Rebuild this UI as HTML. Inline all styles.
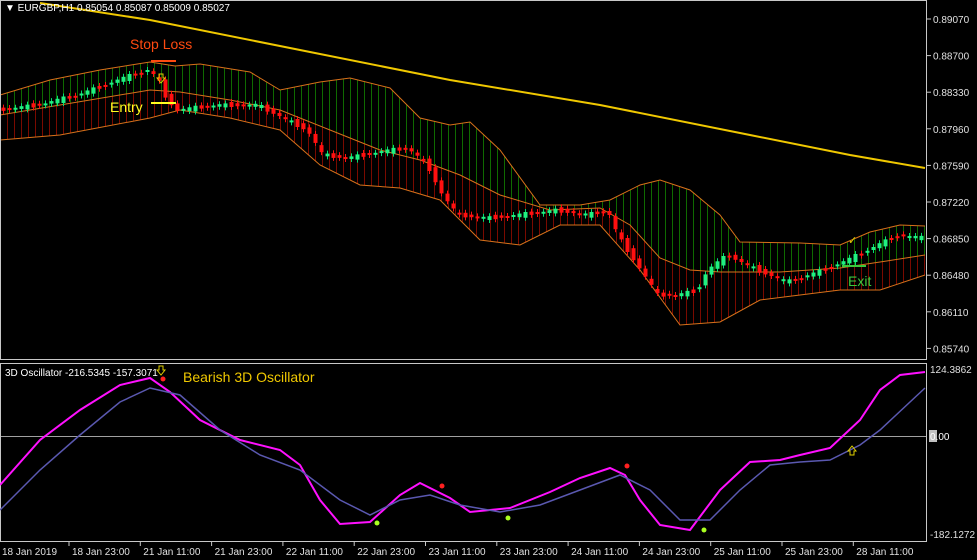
<!DOCTYPE html>
<html><head><meta charset="utf-8"><style>
html,body{margin:0;padding:0;background:#000;width:977px;height:560px;overflow:hidden}
svg{display:block}
text{font-family:"Liberation Sans",sans-serif}
</style></head><body>
<svg id="s" width="977" height="560" viewBox="0 0 977 560" xmlns="http://www.w3.org/2000/svg">
<defs>
<pattern id="hg" width="7" height="10" patternUnits="userSpaceOnUse"><rect x="0" y="0" width="1" height="10" fill="#0f6a00"/></pattern>
<pattern id="hr" width="7" height="10" patternUnits="userSpaceOnUse"><rect x="0" y="0" width="1" height="10" fill="#7a0a00"/></pattern>
</defs>
<rect width="977" height="560" fill="#000"/>
<g id="bands"></g>
<g id="candles"></g>
<polyline fill="none" stroke="#f0c800" stroke-width="2" points="40,3 150,20 300,50 450,80 600,105 750,135 850,155 925,168"/>
<rect x="0.5" y="0.5" width="926" height="359" fill="none" stroke="#c8c8c8"/>
<rect x="0.5" y="363.5" width="926" height="178" fill="none" stroke="#c8c8c8"/>
<line x1="1" y1="436.5" x2="926" y2="436.5" stroke="#a0a0a0"/>
<g id="osc"></g>
<g fill="#fff" font-size="10">
<text x="5" y="11">&#9660; EURGBP,H1  0.85054 0.85087 0.85009 0.85027</text>
<text x="5" y="376">3D Oscillator -216.5345 -157.3071</text>
</g>
<g fill="#e0e0e0" font-size="10" id="axis"></g>
<rect x="929" y="430" width="8" height="12" fill="#c0c0c0"/>
<text x="930" y="440" fill="#fff" font-size="10">0.00</text>
<text x="930" y="373" fill="#e0e0e0" font-size="10">124.3862</text>
<text x="930" y="538" fill="#e0e0e0" font-size="10">-182.1272</text>
<text x="130" y="49" fill="#ff4a10" font-size="14">Stop Loss</text>
<line x1="151" y1="61" x2="176" y2="61" stroke="#ff4a10" stroke-width="2"/>
<text x="110" y="112" fill="#ffff20" font-size="14">Entry</text>
<line x1="151" y1="103" x2="176" y2="103" stroke="#ffff20" stroke-width="2"/>
<text x="848" y="286" fill="#3cc83c" font-size="14">Exit</text>
<line x1="842" y1="266" x2="866" y2="266" stroke="#3cc83c" stroke-width="2"/>
<text x="848" y="244" fill="#e0d000" font-size="11">✓</text>
<text x="183" y="382" fill="#f0c800" font-size="14">Bearish 3D Oscillator</text>
<path d="M159,74h4v4h2l-4,5l-4,-5h2z" fill="none" stroke="#e0d000"/>
<path d="M159,366h4v4h2l-4,5l-4,-5h2z" fill="none" stroke="#e0d000"/>
<path d="M850,455h4v-4h2l-4,-5l-4,5h2z" fill="none" stroke="#e0d000"/>
<circle cx="163" cy="379" r="2.5" fill="#ff2020"/><circle cx="442" cy="486" r="2.5" fill="#ff2020"/><circle cx="627" cy="466" r="2.5" fill="#ff2020"/>
<circle cx="377" cy="523" r="2.5" fill="#aaff20"/><circle cx="508" cy="518" r="2.5" fill="#aaff20"/><circle cx="704" cy="530" r="2.5" fill="#aaff20"/>
</svg>
<script>
(function(){
var S="http://www.w3.org/2000/svg";
function el(p,t,a){var e=document.createElementNS(S,t);for(var k in a)e.setAttribute(k,a[k]);p.appendChild(e);return e;}
function interp(pts,x){for(var i=0;i<pts.length-1;i++){if(x>=pts[i][0]&&x<=pts[i+1][0]){var t=(x-pts[i][0])/(pts[i+1][0]-pts[i][0]);return pts[i][1]+t*(pts[i+1][1]-pts[i][1]);}}return pts[pts.length-1][1];}
function ps(a){return a.map(function(p){return p.join(",")}).join(" ");}
var up=[[0,95],[50,80],[100,70],[150,62],[175,66],[200,64],[250,72],[280,90],[320,82],[350,78],[390,88],[420,118],[450,125],[470,122],[500,150],[540,205],[580,205],[610,200],[640,185],[660,180],[690,190],[720,215],[740,242],[800,243],[840,245],[870,232],[900,225],[925,226]];
var mid=[[0,115],[60,105],[150,90],[180,92],[230,100],[280,110],[330,130],[380,150],[420,160],[460,175],[500,195],[550,210],[600,208],[630,225],[660,258],[690,270],[720,272],[780,272],[840,268],[880,262],[925,255]];
var lo=[[0,140],[60,135],[150,118],[180,110],[230,118],[280,130],[320,165],[360,185],[400,188],[440,200],[480,240],[520,245],[560,225],[600,225],[640,270],[680,325],[720,322],[760,300],[800,295],[840,290],[880,290],[925,275]];
var b=document.getElementById("bands");
el(b,"polygon",{points:ps(up.concat(mid.slice().reverse())),fill:"url(#hg)"});
el(b,"polygon",{points:ps(mid.concat(lo.slice().reverse())),fill:"url(#hr)"});
[up,mid,lo].forEach(function(l){el(b,"polyline",{points:ps(l),fill:"none",stroke:"#d8701a","stroke-width":1});});
var pr=[[0,110],[40,105],[80,95],[120,80],[150,70],[160,78],[170,100],[180,110],[220,105],[260,105],[290,120],[310,130],[325,155],[350,158],[380,152],[410,148],[430,165],[445,195],[460,215],[490,218],[520,215],[560,210],[590,215],[610,210],[620,235],[640,265],[660,295],[680,295],[700,290],[710,270],[730,255],[760,270],[790,282],[820,272],[850,260],[880,245],[900,235],[925,238]];
var c=document.getElementById("candles");
for(var x=3;x<922;x+=6){var y0=interp(pr,x-3),y1=interp(pr,x+3);var j=((x*37)%11)-5;var op=y0+j*0.6,cl=y1-j*0.4;var bull=cl<op;var tp=Math.min(op,cl),h=Math.max(2,Math.abs(op-cl));
el(c,"line",{x1:x+0.5,y1:tp-3,x2:x+0.5,y2:tp+h+3,stroke:bull?"#00e070":"#ff1010"});
el(c,"rect",{x:x-1.5,y:tp,width:4,height:h,fill:bull?"#20f080":"#ff1010"});}
var o=document.getElementById("osc");
el(o,"polyline",{fill:"none",stroke:"#ff10ff","stroke-width":2,points:ps([[0,485],[40,440],[80,410],[120,385],[150,378],[170,392],[200,420],[240,440],[280,450],[300,465],[320,500],[340,524],[370,522],[400,495],[420,483],[450,498],[470,512],[510,508],[550,492],[580,478],[610,468],[625,475],[640,500],[660,525],[690,530],[720,490],[750,462],[780,460],[800,455],[830,448],[860,420],[880,390],[900,375],[925,372]])});
el(o,"polyline",{fill:"none",stroke:"#5a58b0","stroke-width":1.5,points:ps([[0,510],[40,470],[80,435],[120,402],[150,388],[180,395],[220,430],[260,455],[300,470],[340,500],[370,515],[400,500],[430,495],[460,505],[500,512],[540,505],[580,490],[620,475],[650,490],[680,520],[710,520],[740,490],[770,465],[800,462],[830,460],[860,445],[880,430],[925,388]])});
var a=document.getElementById("axis");
["0.89070","0.88700","0.88330","0.87960","0.87590","0.87220","0.86850","0.86480","0.86110","0.85740"].forEach(function(t,i){var y=19+i*36.6;el(a,"line",{x1:927,y1:y,x2:931,y2:y,stroke:"#c8c8c8"});var e=el(a,"text",{x:933,y:y+4});e.textContent=t;});
["18 Jan 2019","18 Jan 23:00","21 Jan 11:00","21 Jan 23:00","22 Jan 11:00","22 Jan 23:00","23 Jan 11:00","23 Jan 23:00","24 Jan 11:00","24 Jan 23:00","25 Jan 11:00","25 Jan 23:00","28 Jan 11:00"].forEach(function(t,i){var x=i==0?2:72+(i-1)*71.3;if(i>0)el(a,"line",{x1:x-3,y1:542,x2:x-3,y2:546,stroke:"#c8c8c8"});var e=el(a,"text",{x:x,y:555});e.textContent=t;});
})();
</script>
</body></html>
